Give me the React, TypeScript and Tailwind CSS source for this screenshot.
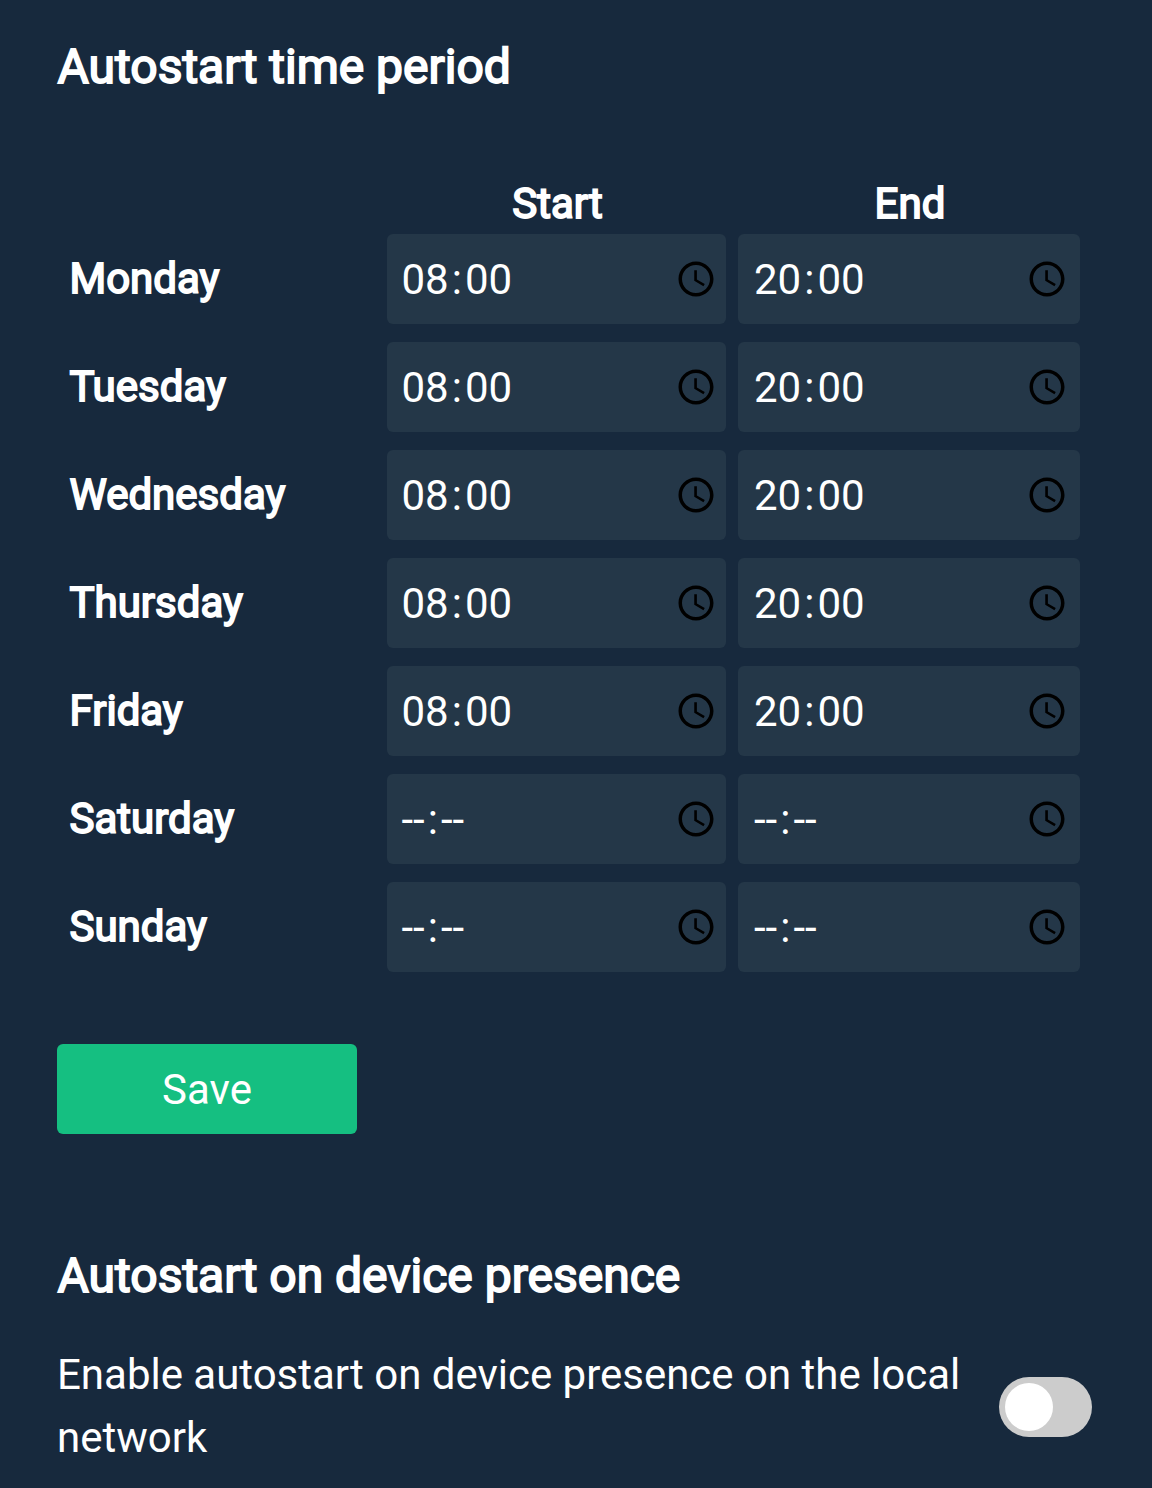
const days = [
  ["Monday", "08:00", "20:00"],
  ["Tuesday", "08:00", "20:00"],
  ["Wednesday", "08:00", "20:00"],
  ["Thursday", "08:00", "20:00"],
  ["Friday", "08:00", "20:00"],
  ["Saturday", "--:--", "--:--"],
  ["Sunday", "--:--", "--:--"],
];

function Clock() {
  return (
    <svg viewBox="0 0 24 24" className="size-[42px] shrink-0 fill-black">
      <path d="M11.99 2C6.47 2 2 6.48 2 12s4.47 10 9.99 10C17.52 22 22 17.52 22 12S17.52 2 11.99 2zM12 20c-4.42 0-8-3.58-8-8s3.58-8 8-8 8 3.58 8 8-3.58 8-8 8z" />
      <path d="M12.5 7H11v6l5.25 3.15.75-1.23-4.5-2.67z" />
    </svg>
  );
}

function TimeField({ value, padding }: { value: string; padding: string }) {
  const [hours, minutes] = value.split(":");
  return (
    <div className={`flex h-[90px] items-center justify-between rounded-[6px] bg-[#243748] text-[42px] ${padding}`}>
      <span className="flex">
        <span>{hours}</span>
        <span className="px-[3px]">:</span>
        <span>{minutes}</span>
      </span>
      <Clock />
    </div>
  );
}

const bold = "font-normal [-webkit-text-stroke:1.8px_white]";

export default function App() {
  return (
    <main className="h-[1488px] w-[1152px] overflow-hidden bg-[#17293d] px-[57px] pt-[35px] font-[Roboto,sans-serif] text-white">
      <h2 className={`${bold} pl-[0.5px] text-[48px] leading-[64px]`}>Autostart time period</h2>
      <section className="mt-[75px]">
        <div className="grid h-[60px] grid-cols-[318px_339px_342px] gap-x-3 pt-[6px] text-center text-[42px] leading-[48px]">
          <span />
          <span className={`${bold} pl-[2px]`}>Start</span>
          <span className={`${bold} pl-[2px]`}>End</span>
        </div>
        <div className="flex flex-col gap-[18px]">
          {days.map(([day, start, end]) => (
            <div key={day} className="grid grid-cols-[318px_339px_342px] items-center gap-x-3">
              <span className={`${bold} pb-[2px] pl-[12.5px] text-[42px]`}>{day}</span>
              <TimeField value={start} padding="pl-[14.5px] pr-[9px]" />
              <TimeField value={end} padding="pl-[16px] pr-[12px]" />
            </div>
          ))}
        </div>
      </section>
      <button className="mt-[72px] block h-[90px] w-[300px] rounded-[6px] bg-[#15bf81] text-[42px]">Save</button>
      <h2 className={`${bold} mt-[110px] pl-[0.5px] text-[48px] leading-[64px]`}>Autostart on device presence</h2>
      <div className="mt-[35px] flex">
        <p className="w-[942px] text-[42px] leading-[63px] tracking-[-0.01px]">Enable autostart on device presence on the local network</p>
        <button role="switch" aria-checked="false" aria-label="Enable autostart" className="mt-[34px] h-[60px] w-[93px] shrink-0 rounded-full bg-[#cccccc] p-[6px]">
          <span className="block size-[48px] rounded-full bg-white" />
        </button>
      </div>
    </main>
  );
}
